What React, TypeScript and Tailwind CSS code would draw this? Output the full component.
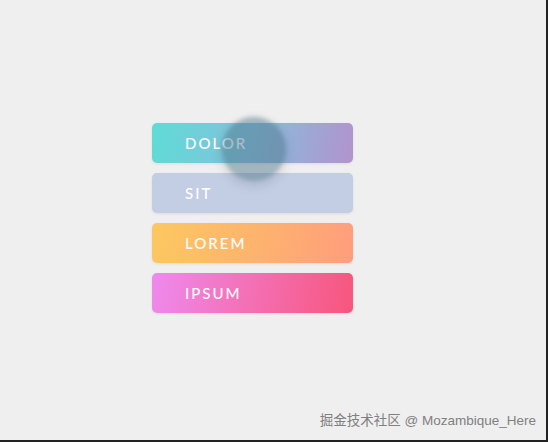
import React from 'react';

const items = [
  { label: 'DOLOR', className: 'bg-[linear-gradient(100deg,#5edcd6_0%,#86bfdc_50%,#a99bd1_90%,#b394cc_100%)]' },
  { label: 'SIT', className: 'bg-[#c3cde3]' },
  { label: 'LOREM', className: 'bg-[linear-gradient(100deg,#fcc860_0%,#fdb46d_50%,#ff9d7d_100%)]' },
  { label: 'IPSUM', className: 'bg-[linear-gradient(100deg,#ee8aee_0%,#f46fb4_50%,#f7567c_100%)]' },
];

export default function App() {
  return (
    <div className="relative w-[548px] h-[442px] overflow-hidden bg-[#efefef] font-['Lato','Noto_Sans',sans-serif] border-r-2 border-b-2 border-[#222]">
      <div className="pt-[123px] pl-[152px] flex flex-col gap-[10px] w-fit">
        {items.map((item) => (
          <button
            key={item.label}
            className={`w-[201px] h-[40px] rounded-[5px] text-left pl-[33px] text-white text-[15px] font-medium tracking-[2px] shadow-[0_1px_3px_rgba(0,0,0,0.08)] ${item.className}`}
          >
            {item.label}
          </button>
        ))}
      </div>

      {/* press ripple */}
      <div className="absolute left-[222px] top-[117px] w-[64px] h-[64px] rounded-full bg-[rgba(70,110,130,0.45)] blur-[2px] shadow-[0_4px_12px_rgba(0,0,0,0.12)]" />

      <div className="absolute right-[10px] bottom-[9px] text-[13.5px] text-[#808080] font-['Liberation_Sans','Noto_Sans_CJK_SC',sans-serif]">
        掘金技术社区 @ Mozambique_Here
      </div>
    </div>
  );
}
